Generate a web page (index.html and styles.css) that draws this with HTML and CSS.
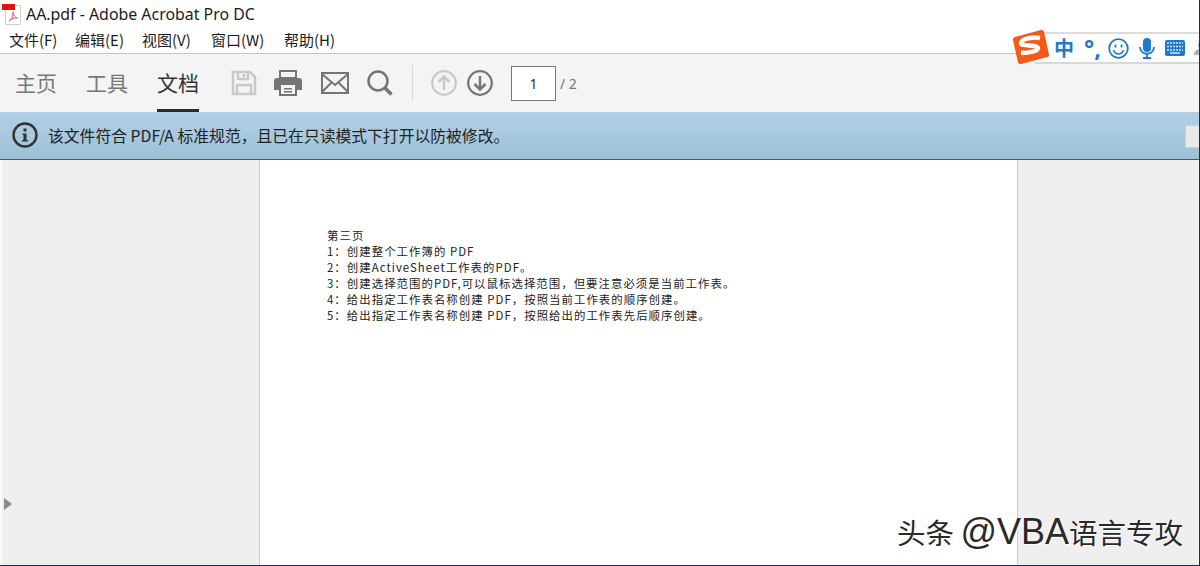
FILE: index.html
```html
<!DOCTYPE html>
<html lang="zh">
<head>
<meta charset="utf-8">
<title>AA.pdf - Adobe Acrobat Pro DC</title>
<link rel="stylesheet" href="styles.css">
</head>
<body>
<div class="app">
  <header class="title-row">
    <svg class="pdf-icon" width="20" height="22" viewBox="0 0 20 22"><path d="M3.500 2.500h15v19h-15z" fill="#fff" stroke="#ccc"/><path d="M0 1h13v6H0z" fill="#e0140f"/><path d="M7 18c3-2 4-5 4-9 .5 4 2 5 4.500 6-3-.5-6 .5-8.500 3z" fill="none" stroke="#d9534f"/></svg>
    <span>AA.pdf - Adobe Acrobat Pro DC</span>
  </header>
  <nav class="menu-row">
    <span class="menu-item">文件(F)</span>
    <span class="menu-item">编辑(E)</span>
    <span class="menu-item">视图(V)</span>
    <span class="menu-item">窗口(W)</span>
    <span class="menu-item">帮助(H)</span>
  </nav>
  <section class="toolbar">
    <div class="tab">主页</div>
    <div class="tab">工具</div>
    <div class="tab active">文档</div>
    <div class="tools">
      <svg class="tool" width="26" height="26" viewBox="0 0 26 26" fill="none" stroke="#c9c9c9" stroke-width="2.500"><path d="M2 2h17l5 5v17H2z"/><path d="M7 2v7h10V2M6 24v-9h14v9"/><path d="M13 4v3"/></svg>
      <svg class="tool" width="28" height="26" viewBox="0 0 28 26"><path d="M6 1h16v7H6z" fill="none" stroke="#757575" stroke-width="2"/><path d="M3 8h22a3 3 0 0 1 3 3v9h-5v6H5v-6H0v-9a3 3 0 0 1 3-3z" fill="#757575"/><path d="M7 15h14v9H7z" fill="#f4f4f4"/><path d="M10 18h8v1.500h-8zM10 21h8v1.500h-8z" fill="#757575"/></svg>
      <svg class="tool" width="28" height="22" viewBox="0 0 28 22" fill="none" stroke="#757575" stroke-width="2"><path d="M1 1h26v20H1z"/><path d="M1 2l13 11L27 2M1 20l10-10M27 20L17 10"/></svg>
      <svg class="tool" width="26" height="26" viewBox="0 0 26 26" fill="none" stroke="#757575"><circle cx="11" cy="11" r="9.500" stroke-width="2.500"/><path d="M17.500 17.500l7 7" stroke-width="3.500"/></svg>
      <i class="divider"></i>
      <svg class="nav up" width="26" height="26" viewBox="0 0 26 26" fill="none" stroke="#c9c9c9" stroke-width="2.200"><circle cx="13" cy="13" r="11.800"/><path d="M13 20V7M7.500 12L13 6.500l5.500 5.500" stroke-width="2.500"/></svg>
      <svg class="nav" width="26" height="26" viewBox="0 0 26 26" fill="none" stroke="#757575" stroke-width="2.200"><circle cx="13" cy="13" r="11.800"/><path d="M13 6v13M7.500 14l5.500 5.500 5.500-5.500" stroke-width="2.500"/></svg>
      <div class="page-box">1</div>
      <span class="page-total">/ 2</span>
    </div>
  </section>
  <section class="info-bar">
    <svg width="26" height="26" viewBox="0 0 26 26"><circle cx="13" cy="13" r="11.500" fill="none" stroke="#333" stroke-width="2.400"/><path d="M11.500 6.500h3v3h-3zM10.500 11.500h4v6.500h1.500v1.500h-6V18h1.500v-5h-1z" fill="#333"/></svg>
    <span>该文件符合 PDF/A 标准规范，且已在只读模式下打开以防被修改。</span>
    <i class="info-btn"></i>
  </section>
  <main class="viewer">
    <aside class="side-left"><i class="arrow"></i></aside>
    <article class="page">
      <p>第三页</p>
      <p>1：创建整个工作簿的 PDF</p>
      <p>2：创建ActiveSheet工作表的PDF。</p>
      <p>3：创建选择范围的PDF,可以鼠标选择范围，但要注意必须是当前工作表。</p>
      <p>4：给出指定工作表名称创建 PDF，按照当前工作表的顺序创建。</p>
      <p>5：给出指定工作表名称创建 PDF，按照给出的工作表先后顺序创建。</p>
    </article>
    <aside class="side-right"></aside>
  </main>
</div>
<div class="ime">
  <svg class="ime-logo" width="38" height="36" viewBox="0 0 38 36"><path d="M3 8L29 1q2-.5 3 1.500l5 23q.5 2-1.500 2.500L9 35q-2 .5-3-1.500L1 11q-.5-2 2-3z" fill="#f4591a"/><path d="M28 9c-6-1-18 0-19 5-.5 4 16 1 17 5 0 3-8 5-17 5" fill="none" stroke="#fff" stroke-width="4.500"/></svg>
  <span class="ime-zh">中</span>
  <span class="ime-punc">°,</span>
  <svg class="ime-smile" width="21" height="21" viewBox="0 0 21 21" fill="none" stroke="#1d79cd" stroke-width="1.800"><circle cx="10.500" cy="10.500" r="9.300"/><path d="M7.500 6.500v3M13.500 6.500v3"/><path d="M5.500 12c1 3 3 4 5 4s4-1 5-4" stroke-width="1.500"/></svg>
  <svg class="ime-mic" width="16" height="21" viewBox="0 0 16 21"><rect x="4" y="0" width="8" height="14" rx="4" fill="#1d79cd"/><path d="M1 9c0 9 14 9 14 0M8 15v5M4 20h8" fill="none" stroke="#1d79cd" stroke-width="1.800"/></svg>
  <svg class="ime-keys" width="20" height="16" viewBox="0 0 20 16"><rect width="20" height="16" rx="2" fill="#1d79cd"/><path d="M2 3h16M2 6.500h16M2 10h16" stroke="#cfe3f6" stroke-width="1.600" stroke-dasharray="2 1"/><path d="M5 13h10" stroke="#cfe3f6" stroke-width="1.500"/></svg>
  <svg class="ime-user" width="9" height="14" viewBox="0 0 9 14"><circle cx="8" cy="4" r="4" fill="#aab2ba"/><path d="M0 14c0-5 4-6 9-6v6z" fill="#aab2ba"/></svg>
</div>
<div class="watermark">头条 <span class="watermark-latin">@VBA</span>语言专攻</div>
</body>
</html>
```

FILE: styles.css
```css
* { box-sizing: border-box; }
html, body { margin: 0; height: 100%; overflow: hidden; background: #fff; }
body {
  width: 1200px;
  height: 566px;
  position: relative;
  font-family: "Noto Sans CJK SC", "Noto Sans", sans-serif;
  color: #222;
  border-right: 1px solid #1a1ab0;
  border-bottom: 1px solid #1a1ab0;
}
.app { display: flex; flex-direction: column; height: 100%; }
.title-row {
  height: 27px;
  display: flex;
  align-items: center;
  gap: 4px;
  padding: 0 0 0 2px;
  font-size: 15.900px;
  font-family: "Noto Sans", "Noto Sans CJK SC", sans-serif;
  color: #1c1c1c;
  flex: none;
}
.pdf-icon { flex: none; }
.menu-row {
  height: 27px;
  flex: none;
  display: flex;
  align-items: center;
  padding: 0 0 1px 9px;
  font-size: 15px;
  border-bottom: 1px solid #c4c4c4;
}
.menu-item { width: 66px; white-space: nowrap; color: #1c1c1c; }
.menu-item:nth-child(2) { width: 67px; }
.menu-item:nth-child(3) { width: 69px; }
.menu-item:nth-child(4) { width: 73px; }
.toolbar {
  height: 58px;
  flex: none;
  display: flex;
  background: #f4f4f4;
  padding-left: 15px;
}
.tab {
  width: 71px;
  height: 58px;
  padding-top: 11px;
  font-size: 21px;
  line-height: 34px;
  color: #777;
  position: relative;
  white-space: nowrap;
}
.tab.active { color: #333; }
.tab.active::after {
  content: "";
  position: absolute;
  left: 0;
  bottom: 0;
  width: 42px;
  height: 3px;
  background: #2c2c2c;
}
.tools { display: flex; align-items: center; height: 58px; margin-left: 3px; }
.tool { flex: none; margin-right: 19px; }
.tools .tool:nth-child(1) { margin-right: 17px; }
.tools .tool:nth-child(3) { margin-right: 18px; }
.divider { width: 1px; height: 36px; background: #d6d6d6; margin: 0 18px 0 0; }
.nav { flex: none; margin-right: 11px; }
.nav.up { margin-right: 10px; }
.page-box {
  width: 45px;
  height: 35px;
  margin-left: 7px;
  background: #fff;
  border: 1px solid #777;
  display: flex;
  align-items: center;
  justify-content: center;
  font-size: 14px;
  font-family: "Noto Sans", sans-serif;
  color: #333;
}
.page-total { margin-left: 4px; font-size: 14px; color: #777; font-family: "Noto Sans", sans-serif; }
.info-bar {
  height: 48px;
  flex: none;
  display: flex;
  align-items: center;
  gap: 10px;
  padding: 0 0 1px 12px;
  background: linear-gradient(#b2d0e6, #9ec1d6);
  border-bottom: 1px solid #4b5a66;
  font-size: 15.800px;
  color: #222;
  position: relative;
}
.info-btn {
  position: absolute;
  right: -1px;
  top: 13px;
  width: 15px;
  height: 23px;
  background: #e9e9e9;
  border: 1px solid #c9d4da;
}
.viewer { flex: 1; display: flex; min-height: 0; }
.side-left {
  width: 260px;
  background: #efefef;
  border-left: 2px solid #fafafa;
  border-right: 1px solid #cdcdcd;
  position: relative;
}
.arrow {
  position: absolute;
  left: 2px;
  top: 338px;
  border-left: 8px solid #8a8a8a;
  border-top: 6px solid transparent;
  border-bottom: 6px solid transparent;
}
.page {
  width: 757px;
  background: #fff;
  padding: 68px 0 0 67px;
  font-size: 11.400px;
  letter-spacing: 1.050px;
  line-height: 15.900px;
  color: #222;
}
.page p { margin: 0; white-space: nowrap; }
.side-right { flex: 1; background: #efefef; border-left: 1px solid #cdcdcd; }
.ime {
  position: absolute;
  left: 1035px;
  top: 32px;
  width: 165px;
  height: 32px;
  display: flex;
  align-items: center;
  background: #fff;
  border-top: 2px solid #dcdcdc;
  border-bottom: 2px solid #d8d8d8;
  color: #1d79cd;
}
.ime-logo { position: absolute; left: -23px; top: -5px; }
.ime-zh { margin-left: 19px; font-size: 20px; font-weight: 700; width: 30px; line-height: 1; flex: none; }
.ime-punc { font-size: 24px; font-weight: 700; width: 24px; line-height: 1; flex: none; font-family: "Noto Sans", sans-serif; }
.ime svg { flex: none; }
.ime-smile { margin-right: 10px; }
.ime-mic { margin-right: 10px; }
.ime-keys { margin-right: 9px; }
.watermark {
  position: absolute;
  right: 16px;
  bottom: 13px;
  font-size: 28.500px;
  line-height: 40px;
  font-family: "Noto Sans CJK SC", "Liberation Sans", sans-serif;
  color: #2a2a2a;
  text-shadow: 1px 1px 0 #fff, -1px 0 0 #fff;
  white-space: nowrap;
}
.watermark-latin { font-family: "Liberation Sans", sans-serif; font-size: 36px; line-height: 1; }
```
